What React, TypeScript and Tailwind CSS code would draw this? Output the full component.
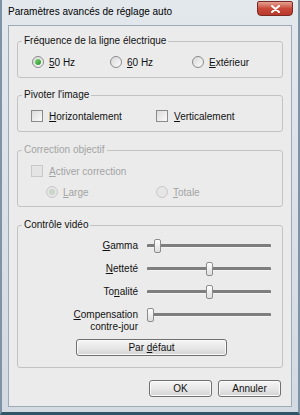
import React from "react";

function Radio({ checked, disabled }: { checked?: boolean; disabled?: boolean }) {
    return (
        <span
            className={
                "flex items-center justify-center w-[12px] h-[12px] rounded-full border shrink-0 " +
                (disabled
                    ? "border-[#c8c8c8] bg-[#e6e6e6]"
                    : "border-[#8a8a8a] bg-gradient-to-br from-[#d9d9d9] to-[#fafafa]")
            }
        >
            {checked && (
                <span
                    className={
                        "w-[6px] h-[6px] rounded-full " +
                        (disabled ? "bg-[#c9d6c9]" : "bg-gradient-to-br from-[#7fdc6f] to-[#1f8f2a]")
                    }
                />
            )}
        </span>
    );
}

function Check({ disabled }: { disabled?: boolean }) {
    return (
        <span
            className={
                "w-[12px] h-[12px] border shrink-0 " +
                (disabled
                    ? "border-[#c8c8c8] bg-[#e4e4e4]"
                    : "border-[#8a8a8a] bg-gradient-to-br from-[#dcdcdc] to-[#fafafa]")
            }
        />
    );
}

function Slider({ pos }: { pos: number }) {
    return (
        <div className="relative w-[124px] h-[12px] flex items-center shrink-0">
            <div className="w-full h-[4px] bg-[#7e7e7e] border-b border-[#f4f4f4] rounded-[1px]" />
            <div
                className="absolute top-[-1px] w-[7px] h-[14px] rounded-[2px] border border-[#8c8c8c] bg-gradient-to-b from-[#ffffff] to-[#dedede]"
                style={{ left: pos }}
            />
        </div>
    );
}

function Bouton({ children, w }: { children: React.ReactNode; w: string }) {
    return (
        <div
            className={
                w +
                " h-[17px] flex items-center justify-center rounded-[3px] border border-[#707070] bg-gradient-to-b from-[#f5f5f5] via-[#e8e8e8] to-[#d3d3d3] shadow-[inset_0_0_0_1px_#fbfbfb]"
            }
        >
            {children}
        </div>
    );
}

function Groupe({ titre, disabled, className, children }: { titre: string; disabled?: boolean; className: string; children: React.ReactNode }) {
    return (
        <fieldset className={"border border-[#c3c3c3] rounded-[3px] " + className}>
            <legend className={"ml-[4px] px-[2px] leading-[14px] " + (disabled ? "text-[#a3a3a3]" : "text-[#111]")}>{titre}</legend>
            {children}
        </fieldset>
    );
}

export default function App() {
    return (
        <div className="w-[300px] h-[415px] flex flex-col bg-gradient-to-b from-[#e3e8ed] to-[#d3dae1] border-x-[2px] border-b-[3px] border-x-[#7f93a6] border-b-[#2f5566] text-[10px] text-[#111] font-['Liberation_Sans',Arial,sans-serif]">
            {/* barre de titre */}
            <div className="h-[25px] flex items-start justify-between pl-[6px] pr-[5px] shrink-0">
                <span className="mt-[5px] text-[10px] leading-[14px] text-black">Paramètres avancés de réglage auto</span>
                <div className="mt-[1px] w-[36px] h-[15px] rounded-b-[4px] rounded-t-[2px] border border-[#7a2a22] bg-gradient-to-b from-[#e3a194] via-[#c9493a] to-[#b73a2c] flex items-center justify-center">
                    <svg width="9" height="8" viewBox="0 0 9 8">
                        <path d="M1 1 L8 7 M8 1 L1 7" stroke="#ffffff" strokeWidth="2" strokeLinecap="round" />
                    </svg>
                </div>
            </div>

            {/* zone cliente */}
            <div className="flex-1 mx-[6px] mb-[5px] bg-[#ebebeb] border border-[#9eaab5] pt-[8px] px-[8px] flex flex-col">
                <Groupe titre="Fréquence de la ligne électrique" className="pt-[7px] pb-[8px]">
                    <div className="flex items-center h-[14px] pl-[14px]">
                        <div className="w-[78px] flex items-center gap-[5px]"><Radio checked /><span><u>5</u>0 Hz</span></div>
                        <div className="w-[82px] flex items-center gap-[5px]"><Radio /><span><u>6</u>0 Hz</span></div>
                        <div className="flex items-center gap-[5px]"><Radio /><span><u>E</u>xtérieur</span></div>
                    </div>
                </Groupe>

                <Groupe titre="Pivoter l'image" className="mt-[10px] pt-[7px] pb-[8px]">
                    <div className="flex items-center h-[14px] pl-[13px]">
                        <div className="w-[125px] flex items-center gap-[6px]"><Check /><span><u>H</u>orizontalement</span></div>
                        <div className="flex items-center gap-[6px]"><Check /><span><u>V</u>erticalement</span></div>
                    </div>
                </Groupe>

                <Groupe titre="Correction objectif" disabled className="mt-[11px] pt-[7px] pb-[7px] text-[#a3a3a3]">
                    <div className="flex items-center h-[14px] pl-[13px] gap-[6px]"><Check disabled /><span><u>A</u>ctiver correction</span></div>
                    <div className="flex items-center h-[14px] mt-[7px] pl-[28px]">
                        <div className="w-[110px] flex items-center gap-[5px]"><Radio checked disabled /><span><u>L</u>arge</span></div>
                        <div className="flex items-center gap-[5px]"><Radio disabled /><span><u>T</u>otale</span></div>
                    </div>
                </Groupe>

                <Groupe titre="Contrôle vidéo" className="mt-[11px] pt-[8px] pb-[11px]">
                    <div className="flex flex-col gap-[11px]">
                        <div className="flex items-start gap-[9px]">
                            <span className="w-[120px] text-right leading-[12px]"><u>G</u>amma</span>
                            <Slider pos={7} />
                        </div>
                        <div className="flex items-start gap-[9px]">
                            <span className="w-[120px] text-right leading-[12px]"><u>N</u>etteté</span>
                            <Slider pos={59} />
                        </div>
                        <div className="flex items-start gap-[9px]">
                            <span className="w-[120px] text-right leading-[12px]">To<u>n</u>alité</span>
                            <Slider pos={59} />
                        </div>
                        <div className="flex items-start gap-[9px]">
                            <span className="w-[120px] text-right leading-[12px]"><u>C</u>ompensation<br />contre-jour</span>
                            <Slider pos={0} />
                        </div>
                    </div>
                    <div className="mt-[6px] pl-[58px]">
                        <Bouton w="w-[151px]"><span>Par <u>d</u>éfaut</span></Bouton>
                    </div>
                </Groupe>

                <div className="mt-[12px] flex justify-end gap-[6px] pr-[2px]">
                    <Bouton w="w-[63px]">OK</Bouton>
                    <Bouton w="w-[63px]">Annuler</Bouton>
                </div>
            </div>
        </div>
    );
}
